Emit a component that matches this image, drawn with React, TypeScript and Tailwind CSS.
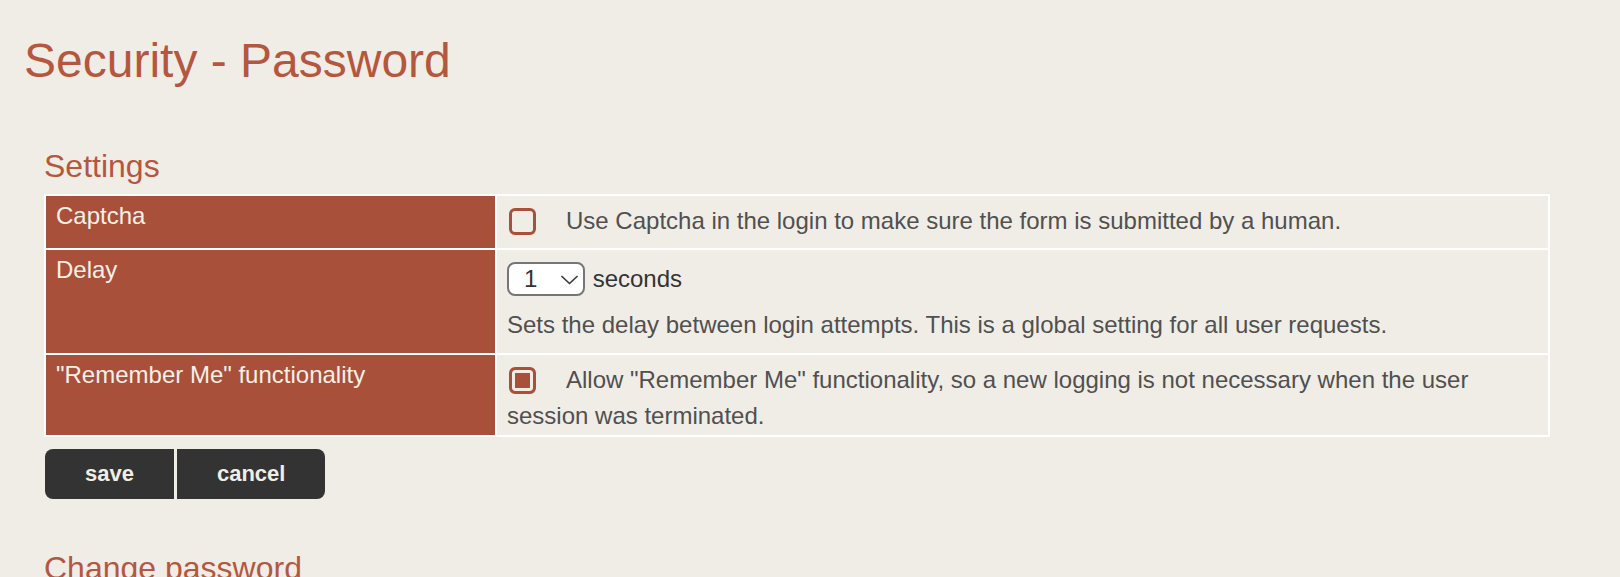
import React from "react";

const cbClass =
  "appearance-none inline-block w-[27px] h-[27px] border-[3px] border-[#a9503a] rounded-[6px] bg-[#f0ede7] align-middle mt-[6px] mb-[8px] ml-[2px] mr-[30px] checked:bg-[#a9503a] checked:shadow-[inset_0_0_0_3px_#f0ede7]";

export default function App() {
  return (
    <div className="min-h-screen bg-[#f0ede7] font-['Liberation_Sans',Arial,Helvetica,sans-serif] pl-[24px] pt-[34px] pb-[40px]">
      <h1 className="text-[48px] leading-[54px] font-normal text-[#b5573e]">Security - Password</h1>

      <section className="pl-[20px] mt-[60px]">
        <h2 className="text-[32px] leading-[37px] font-normal text-[#b5573e]">Settings</h2>

        <div className="mt-[9px] w-[1506px] grid grid-cols-[449px_1fr] gap-[2px] p-[2px] bg-white text-[24px] leading-[28px]">
          {/* Row 1 */}
          <div className="bg-[#a9503a] text-[#f5efe6] pl-[10px] pr-[10px] pt-[6px]">Captcha</div>
          <div className="bg-[#f0ede7] text-[#505050] pl-[10px] pr-[10px] pt-[6px] pb-[5px]">
            <input type="checkbox" className={cbClass} aria-label="Captcha" />Use Captcha in the login to make sure the form is submitted by a human.
          </div>

          {/* Row 2 */}
          <div className="bg-[#a9503a] text-[#f5efe6] pl-[10px] pr-[10px] pt-[6px]">Delay</div>
          <div className="bg-[#f0ede7] text-[#505050] pl-[10px] pr-[10px] pt-[6px] pb-[5px]">
            <div className="text-[#333333]">
              <span className="relative inline-flex align-baseline mt-[6px] mb-[6px] mr-[1px]">
                <select
                  defaultValue="1"
                  aria-label="Delay"
                  className="appearance-none w-[78px] h-[34px] border-2 border-[#767676] rounded-[8px] bg-white pl-[15px] pr-[24px] py-0 text-[24px] leading-[28px] text-[#333333] outline-none font-['Liberation_Sans',Arial,Helvetica,sans-serif]"
                >
                  <option value="0">0</option>
                  <option value="1">1</option>
                  <option value="2">2</option>
                  <option value="3">3</option>
                  <option value="5">5</option>
                </select>
                <svg
                  className="absolute left-[54px] top-[13px] pointer-events-none"
                  width="17"
                  height="10"
                  viewBox="0 0 17 10"
                  fill="none"
                >
                  <polyline points="1,1.5 8.5,8.5 16,1.5" stroke="#3a3a3a" strokeWidth="1.7" strokeLinecap="round" strokeLinejoin="round" />
                </svg>
              </span>{" "}
              seconds
            </div>
            <p className="my-[9px]">Sets the delay between login attempts. This is a global setting for all user requests.</p>
          </div>

          {/* Row 3 */}
          <div className="bg-[#a9503a] text-[#f5efe6] pl-[10px] pr-[10px] pt-[6px]">"Remember Me" functionality</div>
          <div className="bg-[#f0ede7] text-[#505050] pl-[10px] pr-[10px] pt-[6px] pb-[5px]">
            <input type="checkbox" defaultChecked className={cbClass} aria-label="Remember Me" />Allow "Remember Me" functionality, so a new logging is not necessary when the user session was terminated.
          </div>
        </div>

        <div className="mt-[12px] ml-[1px] flex gap-[3px]">
          <button className="bg-[#333333] text-[#f0ede7] font-bold text-[22px] leading-[26px] px-[40px] py-[12px] rounded-l-[8px]">
            save
          </button>
          <button className="bg-[#333333] text-[#f0ede7] font-bold text-[22px] leading-[26px] px-[40px] py-[12px] rounded-r-[8px]">
            cancel
          </button>
        </div>

        <h2 className="mt-[51px] text-[32px] leading-[37px] font-normal text-[#b5573e]">Change password</h2>
      </section>
    </div>
  );
}
